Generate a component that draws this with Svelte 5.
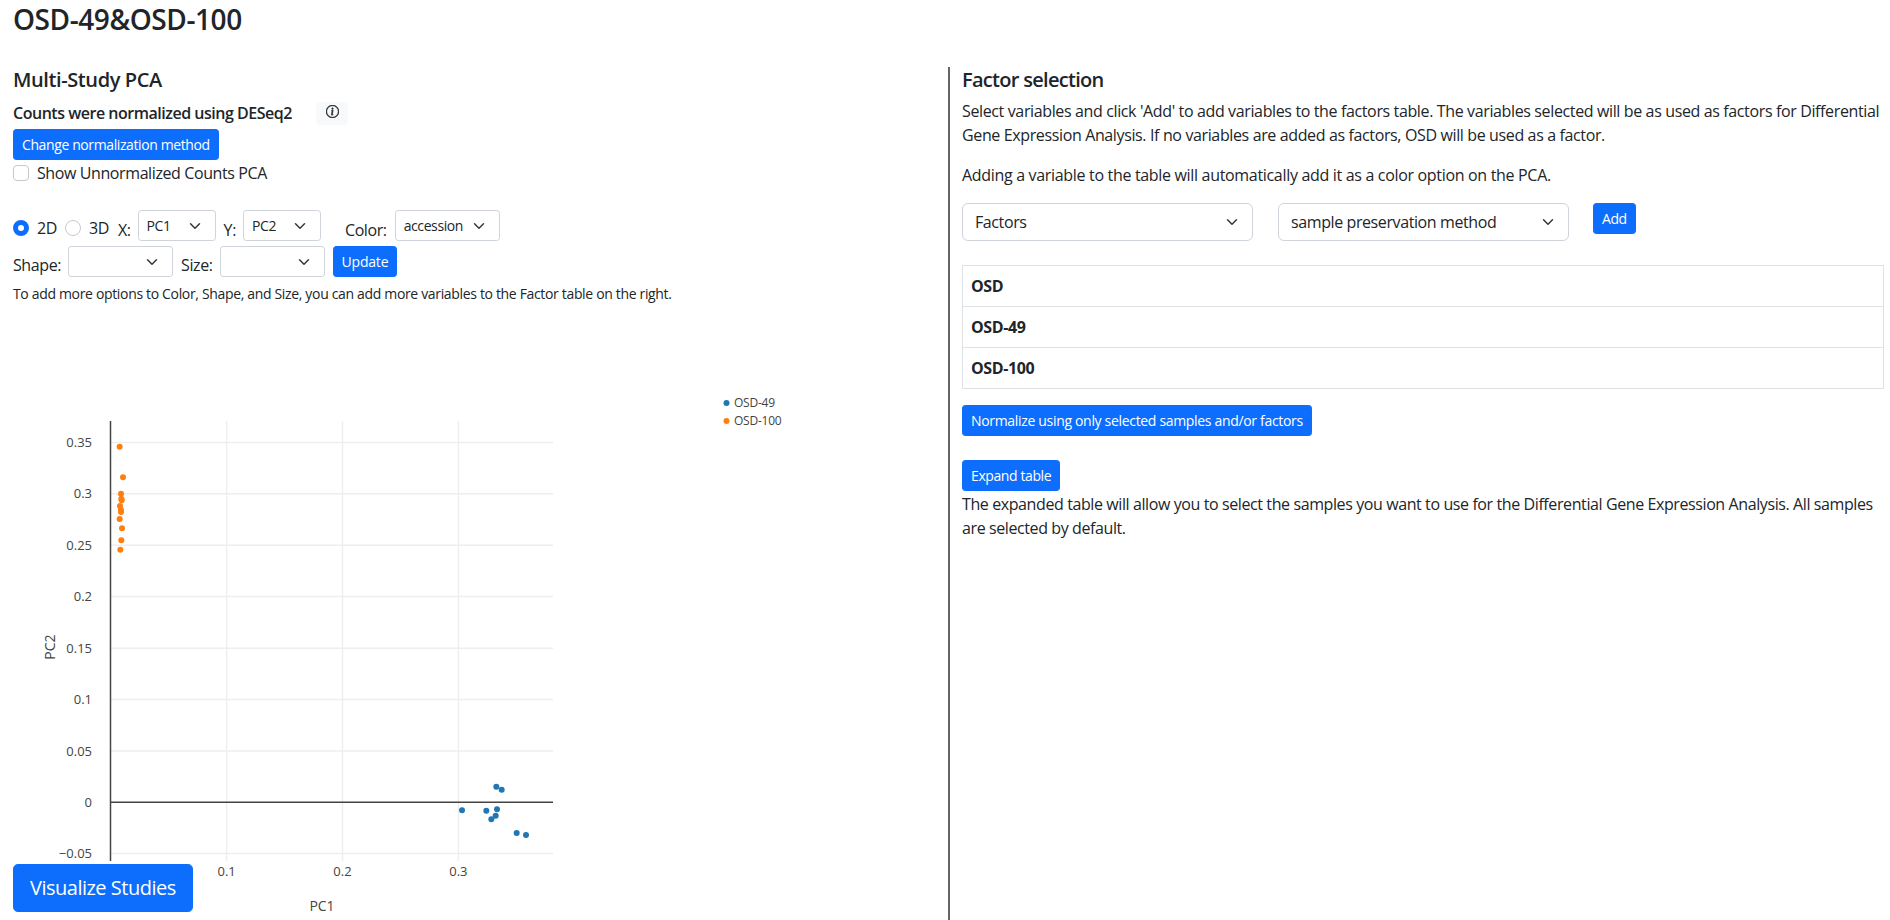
<script>
  const blue = [[169,110],[185,119],[66,181],[139,182],[171,178],[167,197],[154,208],[230,249],[258,255]]
    .map(([x, y]) => [x / 3 + 440, y / 3 + 750]);
  const orange = [[179,80],[189,172],[183,221],[184,236],[185,241],[180,258],[183,270],[183,276],[179,297],[186,325],[184,361],[181,389]]
    .map(([x, y]) => [x / 3 + 60, y / 3 + 420]);

  const yTicks = [
    ["0.35", 442.6], ["0.3", 493.8], ["0.25", 545.2], ["0.2", 596.6], ["0.15", 648.2],
    ["0.1", 699.6], ["0.05", 751], ["−0.05", 853.4]
  ];
  const xTicks = [["0.1", 226.6], ["0.2", 342.5], ["0.3", 458.4]];
  const factors = ["OSD", "OSD-49", "OSD-100"];
</script>

<div class="page">
  <h3 class="title">OSD-49&amp;OSD-100</h3>

  <div class="row">
    <section class="left">
      <h5>Multi-Study PCA</h5>
      <div class="norm">
        <strong>Counts were normalized using DESeq2</strong>
        <button class="info" aria-label="info">
          <svg width="13" height="13" viewBox="0 0 16 16" fill="#212529" stroke="#212529" stroke-width="0.6">
            <path d="M8 15A7 7 0 1 1 8 1a7 7 0 0 1 0 14m0 1A8 8 0 1 0 8 0a8 8 0 0 0 0 16" />
            <path d="m8.93 6.588-2.29.287-.082.38.45.083c.294.07.352.176.288.469l-.738 3.468c-.194.897.105 1.319.808 1.319.545 0 1.178-.252 1.465-.598l.088-.416c-.2.176-.492.246-.686.246-.275 0-.375-.193-.304-.533zM9 4.5a1 1 0 1 1-2 0 1 1 0 0 1 2 0" />
          </svg>
        </button>
      </div>
      <button class="btn change">Change normalization method</button>
      <label class="check"><input type="checkbox" /> Show Unnormalized Counts PCA</label>

      <div class="controls first">
        <label class="radio"><input type="radio" name="dim" checked /> 2D</label>
        <label class="radio three"><input type="radio" name="dim" /> 3D</label>
        <span class="lbl x">X:</span>
        <select class="sm pc"><option>PC1</option></select>
        <span class="lbl y">Y:</span>
        <select class="sm pc"><option>PC2</option></select>
        <span class="lbl color">Color:</span>
        <select class="sm acc"><option>accession</option></select>
      </div>
      <div class="controls second">
        <span class="lbl">Shape:</span>
        <select class="sm wide"><option></option></select>
        <span class="lbl size">Size:</span>
        <select class="sm wide"><option></option></select>
        <button class="btn update">Update</button>
      </div>
      <p class="hint">To add more options to Color, Shape, and Size, you can add more variables to the Factor table on the right.</p>

      <svg class="plot" width="935" height="530" viewBox="13 390 935 530">
        {#each yTicks as [label, y]}
          <line x1="110" x2="553" y1={y} y2={y} class="grid" />
          <text x="92" y={y + 4.5} text-anchor="end" class="tick">{label}</text>
        {/each}
        <text x="92" y="806.5" text-anchor="end" class="tick">0</text>
        {#each xTicks as [label, x]}
          <line x1={x} x2={x} y1="421" y2="861" class="grid" />
          <text x={x} y="876" text-anchor="middle" class="tick">{label}</text>
        {/each}
        <line x1="110" x2="553" y1="802.3" y2="802.3" class="axis" />
        <line x1="110.5" x2="110.5" y1="421" y2="861" class="axis" />
        <text x="322" y="911" text-anchor="middle" class="title-axis">PC1</text>
        <text transform="translate(55 647) rotate(-90)" text-anchor="middle" class="title-axis">PC2</text>

        {#each orange as [x, y]}
          <circle cx={x} cy={y} r="3" fill="#ff7f0e" />
        {/each}
        {#each blue as [x, y]}
          <circle cx={x} cy={y} r="3" fill="#1f77b4" />
        {/each}

        <circle cx="726.5" cy="403" r="3" fill="#1f77b4" />
        <text x="734" y="406.5" class="legend">OSD-49</text>
        <circle cx="726.5" cy="421" r="3" fill="#ff7f0e" />
        <text x="734" y="424.5" class="legend">OSD-100</text>
      </svg>
    </section>

    <section class="right">
      <h5>Factor selection</h5>
      <p class="intro">Select variables and click 'Add' to add variables to the factors table. The variables selected will be as used as factors for Differential Gene Expression Analysis. If no variables are added as factors, OSD will be used as a factor.</p>
      <p class="adding">Adding a variable to the table will automatically add it as a color option on the PCA.</p>
      <div class="add-row">
        <select class="lg"><option>Factors</option></select>
        <select class="lg"><option>sample preservation method</option></select>
        <button class="btn">Add</button>
      </div>
      <table>
        <tbody>
          {#each factors as f}
            <tr><th>{f}</th></tr>
          {/each}
        </tbody>
      </table>
      <button class="btn normalize">Normalize using only selected samples and/or factors</button>
      <button class="btn expand">Expand table</button>
      <p class="note">The expanded table will allow you to select the samples you want to use for the Differential Gene Expression Analysis. All samples are selected by default.</p>
    </section>
  </div>

  <button class="btn visualize">Visualize Studies</button>
</div>

<style>
  :global(body) {
    margin: 0;
    background: #fff;
    overflow: hidden;
  }

  .page {
    height: 920px;
    overflow: hidden;
    padding: 2px 6px 0 13px;
    box-sizing: border-box;
    color: #212529;
    font-family: "Open Sans", "Noto Sans", sans-serif;
    font-size: 16px;
    line-height: 24px;
    letter-spacing: -0.025em;
  }

  .title {
    margin: 0;
    font-size: 28px;
    line-height: 34px;
    font-weight: 600;
    letter-spacing: -0.015em;
  }

  .row {
    display: grid;
    grid-template-columns: 935px 1fr;
    margin-top: 31px;
    height: 853px;
  }

  h5 {
    margin: 0;
    font-size: 20px;
    line-height: 24px;
    font-weight: 600;
    letter-spacing: -0.035em;
  }

  .left h5 {
    letter-spacing: -0.02em;
  }

  .left {
    padding-top: 1px;
    min-width: 0;
  }

  .right {
    border-left: 2px solid #666;
    padding: 1px 0 0 12px;
    min-width: 0;
  }

  .norm {
    display: flex;
    margin-top: 9px;
    height: 24px;
    margin-bottom: 4px;
  }

  .norm strong {
    flex: none;
    width: 279px;
    font-weight: 600;
    letter-spacing: -0.03em;
  }

  .info {
    width: 32px;
    height: 23px;
    margin: 1px 0 0 24px;
    padding: 0 0 4px;
    background: #f8f9fa;
    border: 0;
    border-radius: 4px;
    display: flex;
    align-items: center;
    justify-content: center;
  }

  .btn {
    display: block;
    height: 31px;
    padding: 0 8px;
    background: #0d6efd;
    color: #fff;
    border: 1px solid #0d6efd;
    border-radius: 3.2px;
    font: inherit;
    font-size: 14px;
    letter-spacing: inherit;
  }

  .change {
    margin-top: 1px;
    letter-spacing: -0.028em;
  }

  .check {
    display: flex;
    align-items: center;
    gap: 8px;
    height: 24px;
    margin-top: 1px;
  }

  input[type="checkbox"],
  input[type="radio"] {
    appearance: none;
    width: 16px;
    height: 16px;
    margin: 0;
    background: #fff;
    border: 1px solid #c6c9cd;
    flex: none;
  }

  input[type="checkbox"] {
    border-radius: 4px;
  }

  input[type="radio"] {
    border-radius: 50%;
  }

  input[type="radio"]:checked {
    border: 5px solid #0d6efd;
  }

  .controls {
    display: flex;
    align-items: flex-end;
  }

  .controls.first {
    margin-top: 25px;
  }

  .controls.second {
    margin-top: 5px;
  }

  .radio {
    display: flex;
    align-items: center;
    gap: 8px;
    margin-right: 8px;
    height: 24px;
    position: relative;
    top: -1px;
  }

  .radio.three {
    margin-right: 9px;
  }

  .lbl {
    height: 24px;
  }

  .first .lbl {
    position: relative;
    top: 1px;
  }

  .x {
    margin-right: 7px;
  }

  .y {
    margin: 0 7px 0 8px;
  }

  .color {
    margin: 0 8px 0 24px;
  }

  .second .lbl {
    margin-right: 7px;
  }

  .second .size {
    margin-left: 8px;
  }

  select {
    appearance: none;
    box-sizing: border-box;
    background: #fff url("data:image/svg+xml,%3csvg xmlns='http://www.w3.org/2000/svg' viewBox='0 0 16 16'%3e%3cpath fill='none' stroke='%23343a40' stroke-linecap='round' stroke-linejoin='round' stroke-width='2' d='m2 5 6 6 6-6'/%3e%3c/svg%3e") no-repeat right 12px center / 16px 12px;
    border: 1px solid #ced4da;
    color: #212529;
    font: inherit;
    letter-spacing: inherit;
  }

  .sm {
    height: 31px;
    padding: 0 36px 0 8px;
    border-radius: 3.2px;
    font-size: 14px;
    line-height: 21px;
  }

  .pc {
    width: 78px;
  }

  .acc {
    width: 105px;
  }

  .wide {
    width: 105px;
  }

  .update {
    margin-left: 8px;
    letter-spacing: -0.015em;
  }

  .hint {
    margin: 6px 0 0;
    font-size: 14px;
    line-height: 21px;
    letter-spacing: -0.024em;
  }

  .plot {
    display: block;
    margin-top: 86px;
  }

  .plot text {
    font-family: "Open Sans", verdana, arial, sans-serif;
    letter-spacing: 0;
    fill: #444;
  }

  .tick {
    font-size: 13px;
  }

  .plot .legend {
    font-size: 12px;
    letter-spacing: -0.02em;
  }

  .title-axis {
    font-size: 14px;
  }

  .grid {
    stroke: #eee;
    stroke-width: 1.5;
  }

  .axis {
    stroke: #444;
    stroke-width: 1.5;
  }

  .right p {
    margin: 0;
  }

  .right p.intro {
    margin: 7px 0 16px;
    letter-spacing: -0.023em;
  }

  .right p.adding {
    letter-spacing: -0.02em;
  }

  .add-row {
    display: flex;
    align-items: flex-start;
    gap: 24px;
    margin-top: 16px;
  }

  .lg {
    width: 291px;
    height: 38px;
    padding: 0 36px 0 12px;
    border-radius: 6px;
    font-size: 16px;
  }

  .lg + .lg {
    margin-left: 1px;
  }

  table {
    width: 100%;
    margin-top: 24px;
    border-collapse: collapse;
  }

  th {
    height: 41px;
    padding: 0 8px;
    box-sizing: border-box;
    border: 1px solid #dee2e6;
    text-align: left;
    font-weight: 700;
  }

  .normalize {
    margin-top: 16px;
    letter-spacing: -0.023em;
  }

  .expand {
    margin-top: 24px;
  }

  .right p.note {
    margin-top: 1px;
  }

  .visualize {
    position: fixed;
    left: 13px;
    bottom: 8px;
    height: 48px;
    padding: 0 16px;
    border-radius: 4.8px;
    font-size: 20px;
    letter-spacing: -0.025em;
  }
</style>
